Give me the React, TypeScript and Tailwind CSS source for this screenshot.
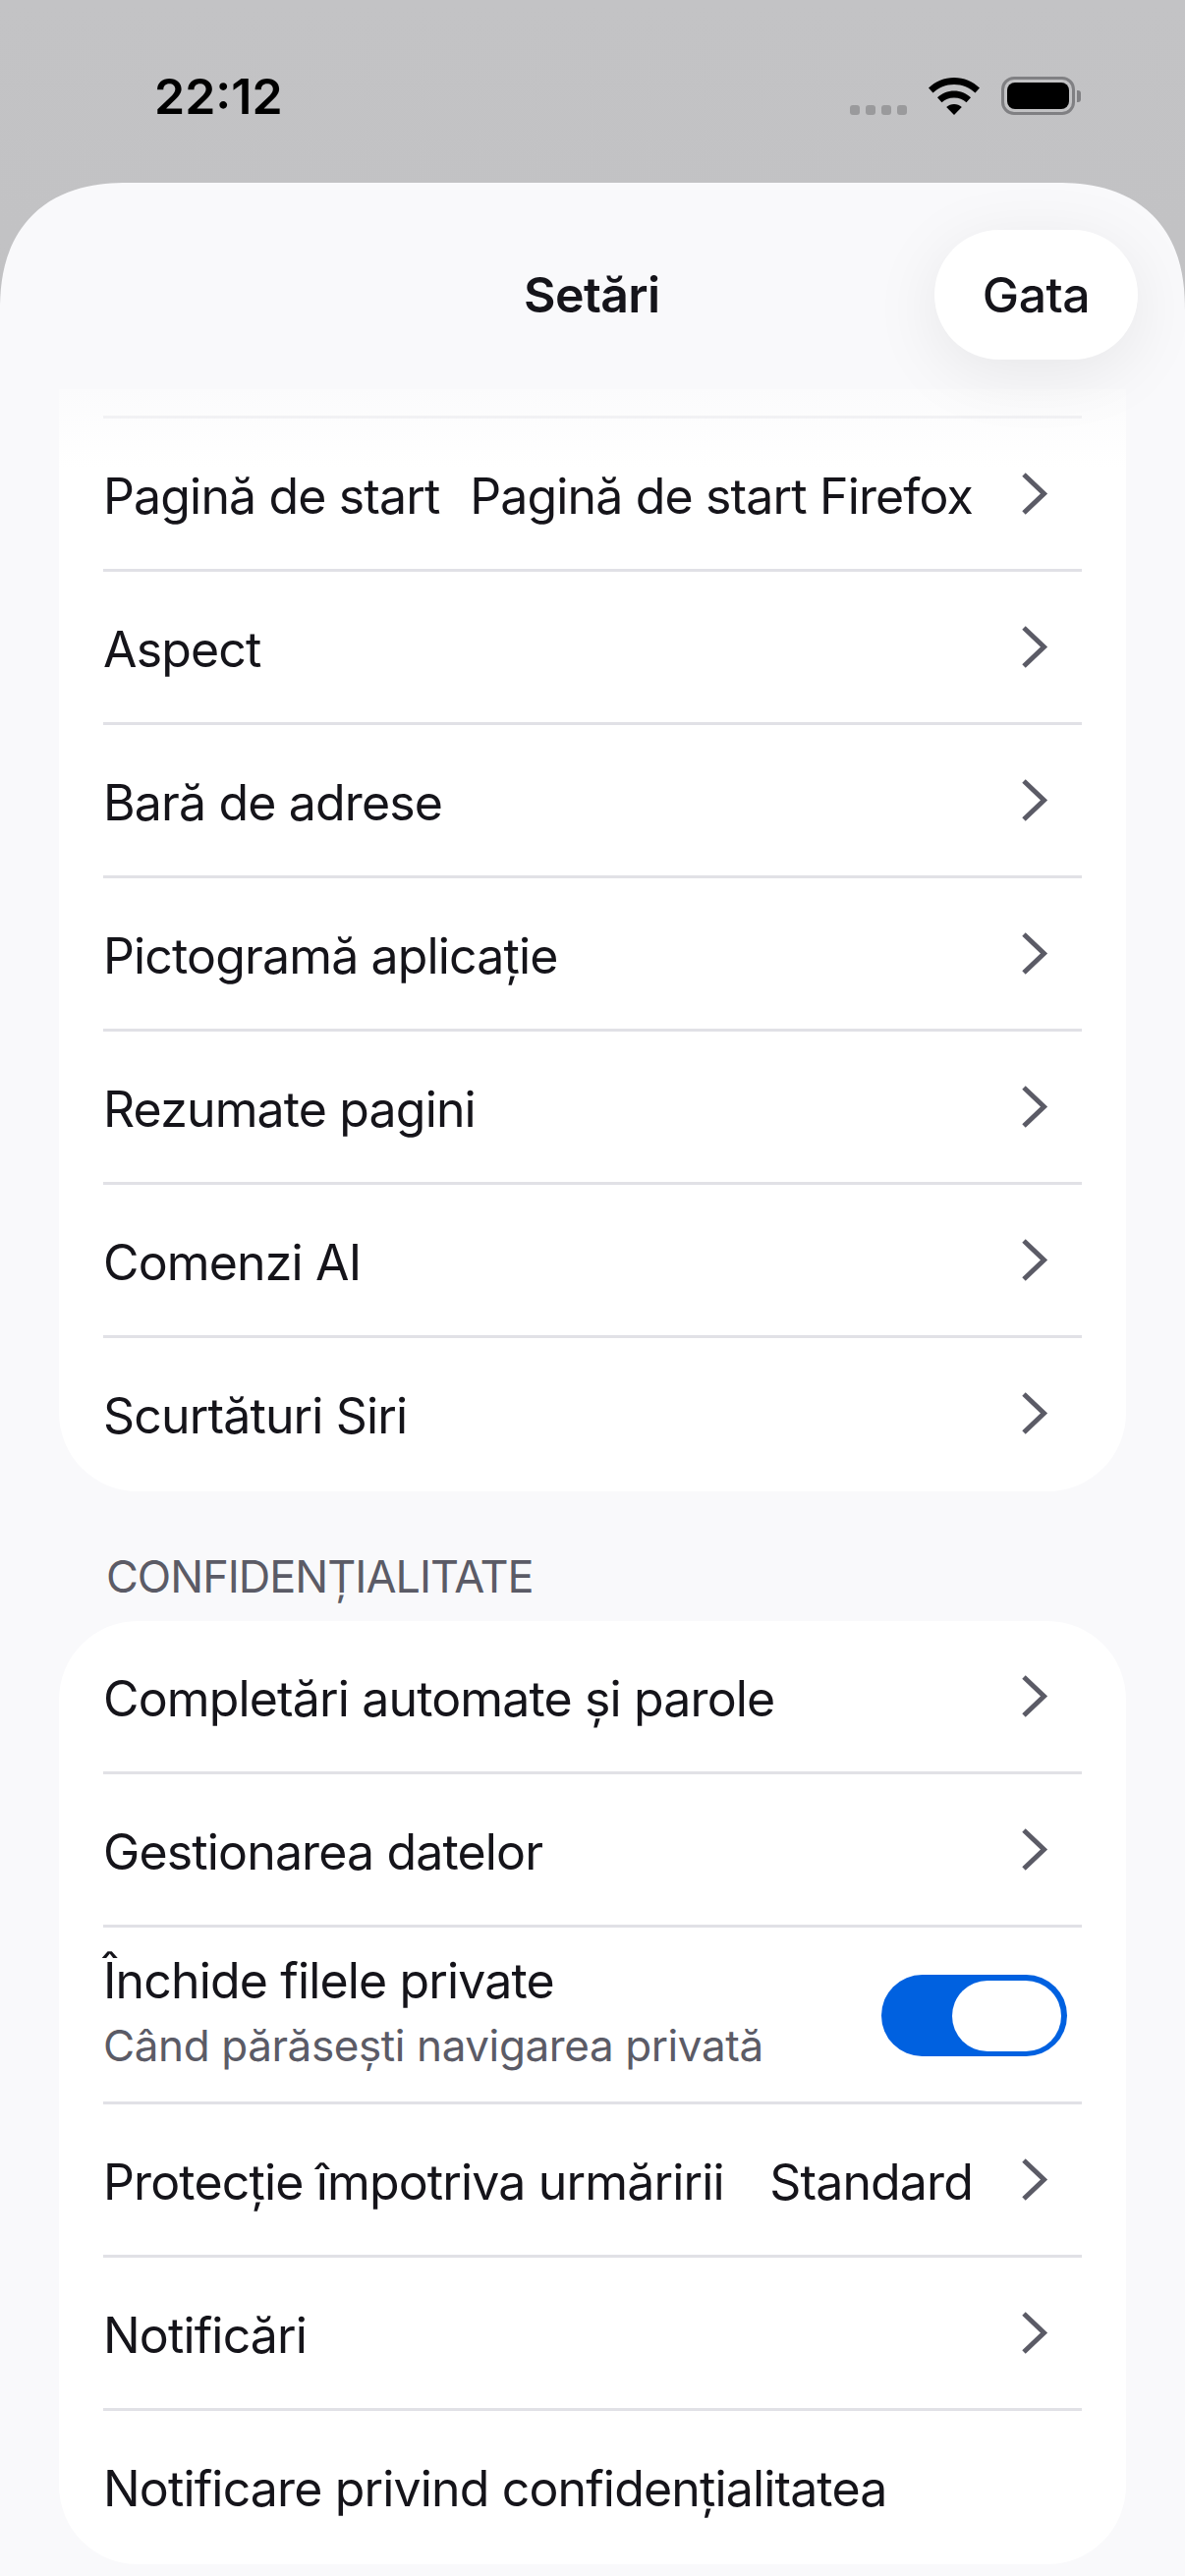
import React from "react";

const Chevron = () => (
  <svg width="29" height="47" viewBox="0 0 29 47" fill="none" className="shrink-0">
    <path d="M4 4 L24.500 23.500 L4 43" stroke="#5b5b66" strokeWidth="5" />
  </svg>
);

const Row = ({ label, value, arrow = true, last = false }: { label: string; value?: string; arrow?: boolean; last?: boolean }) => (
  <div className={`flex h-[156px] items-center ${last ? "" : "border-b-[3px] border-[#e1e1e6]"}`}>
    <span className={`flex-1 whitespace-nowrap tracking-[-0.85px] ${last ? "mt-[3px]" : "mt-[6px]"}`}>{label}</span>
    {value && <span className="mr-[48px] mt-[6px] whitespace-nowrap tracking-[-0.85px]">{value}</span>}
    {arrow && (
      <span className={last ? "mb-[3px] mr-[34px]" : "mr-[34px]"}>
        <Chevron />
      </span>
    )}
  </div>
);

const StatusBar = () => (
  <div className="flex h-[186px] items-start justify-between pl-[157px] pr-[106px] pt-[70px] text-black">
    <span className="text-[50px] font-semibold leading-[56px]">22:12</span>
    <div className="flex items-start">
      <div className="mr-[22px] mt-[37px] flex gap-[6px]">
        <span className="h-[10px] w-[10px] rounded-[3px] bg-[#9a9a9c]" />
        <span className="h-[10px] w-[10px] rounded-[3px] bg-[#9a9a9c]" />
        <span className="h-[10px] w-[10px] rounded-[3px] bg-[#9a9a9c]" />
        <span className="h-[10px] w-[10px] rounded-[3px] bg-[#9a9a9c]" />
      </div>
      <svg width="52" height="38" viewBox="0 0 52 38" className="mt-[9px]">
        <path d="M26 0C16 0 7 4 0 10.500L4.500 15.500C10 10.300 17.700 7 26 7S42 10.300 47.500 15.500L52 10.500C45 4 36 0 26 0Z" fill="#000" />
        <path d="M26 13.500C19.500 13.500 13.500 16 9 20.300L13.500 25.300C16.700 22.300 21 20.400 26 20.400S35.300 22.300 38.500 25.300L43 20.300C38.500 16 32.500 13.500 26 13.500Z" fill="#000" />
        <path d="M26 27C23 27 20.300 28 18.200 30L26 38L33.800 30C31.700 28 29 27 26 27Z" fill="#000" />
      </svg>
      <div className="ml-[22px] mt-[8px] flex items-center">
        <div className="h-[39px] w-[75px] rounded-[13px] border-[3px] border-[#808083] p-[3px]">
          <div className="h-full w-full rounded-[8px] bg-black" />
        </div>
        <div className="ml-[2px] h-[12px] w-[4px] rounded-r-[3px] bg-[#808083]" />
      </div>
    </div>
  </div>
);

export default function App() {
  return (
    <div
      className="h-[2622px] w-[1206px] overflow-hidden bg-gradient-to-b from-[#c3c3c5] to-[#b8b8ba] text-[50px] text-[#15141a]"
      style={{ fontFamily: "Inter, 'Noto Sans', sans-serif" }}
    >
      <StatusBar />
      <div className="h-[2436px] overflow-hidden rounded-t-[130px] bg-[#f9f9fb] [corner-shape:superellipse(1.24)]">
        {/* header sits above the list so the button shadow falls on the first card */}
        <div className="relative z-10 flex h-[210px] items-start justify-between pl-[533px] pr-[48px] pt-[48px]">
          <span className="mt-[36px] font-semibold leading-[60px] tracking-[-0.6px]">Setări</span>
          <div className="flex h-[132px] w-[207px] items-center justify-center rounded-[66px] bg-white font-medium tracking-[-0.5px] shadow-[0_14px_70px_rgba(0,0,0,0.08)]">
            Gata
          </div>
        </div>

        <div className="relative mx-[60px] rounded-b-[80px] bg-white pl-[45px] pr-[45px]">
          <div className="absolute inset-x-0 top-0 h-[80px] bg-gradient-to-b from-[#fbfbfc] to-transparent" />
          <div className="h-[30px] border-b-[3px] border-[#e1e1e6]" />
          <Row label="Pagină de start" value="Pagină de start Firefox" />
          <Row label="Aspect" />
          <Row label="Bară de adrese" />
          <Row label="Pictogramă aplicație" />
          <Row label="Rezumate pagini" />
          <Row label="Comenzi AI" />
          <Row label="Scurtături Siri" last />
        </div>

        <div className="pb-[12px] pl-[108px] pt-[54px] text-[45px] leading-[66px] tracking-[-1px] text-[#5b5b66]">CONFIDENȚIALITATE</div>

        <div className="mx-[60px] rounded-[80px] bg-white pl-[45px] pr-[45px]">
          <Row label="Completări automate și parole" />
          <Row label="Gestionarea datelor" />
          <div className="flex h-[180px] items-center justify-between border-b-[3px] border-[#e1e1e6]">
            <div className="pb-[7px]">
              <div className="mb-[7px] leading-[62px] tracking-[-0.85px]">Închide filele private</div>
              <div className="text-[44px] leading-[56px] tracking-[-0.4px] text-[#5b5b66]">Când părăsești navigarea privată</div>
            </div>
            <div className="mr-[15px] mt-[2px] flex h-[83px] w-[189px] items-center justify-end rounded-full bg-[#0061e0] pr-[6px]">
              <div className="h-[72px] w-[111px] rounded-full bg-white" />
            </div>
          </div>
          <Row label="Protecție împotriva urmăririi" value="Standard" />
          <Row label="Notificări" />
          <Row label="Notificare privind confidențialitatea" arrow={false} last />
        </div>
      </div>
    </div>
  );
}
